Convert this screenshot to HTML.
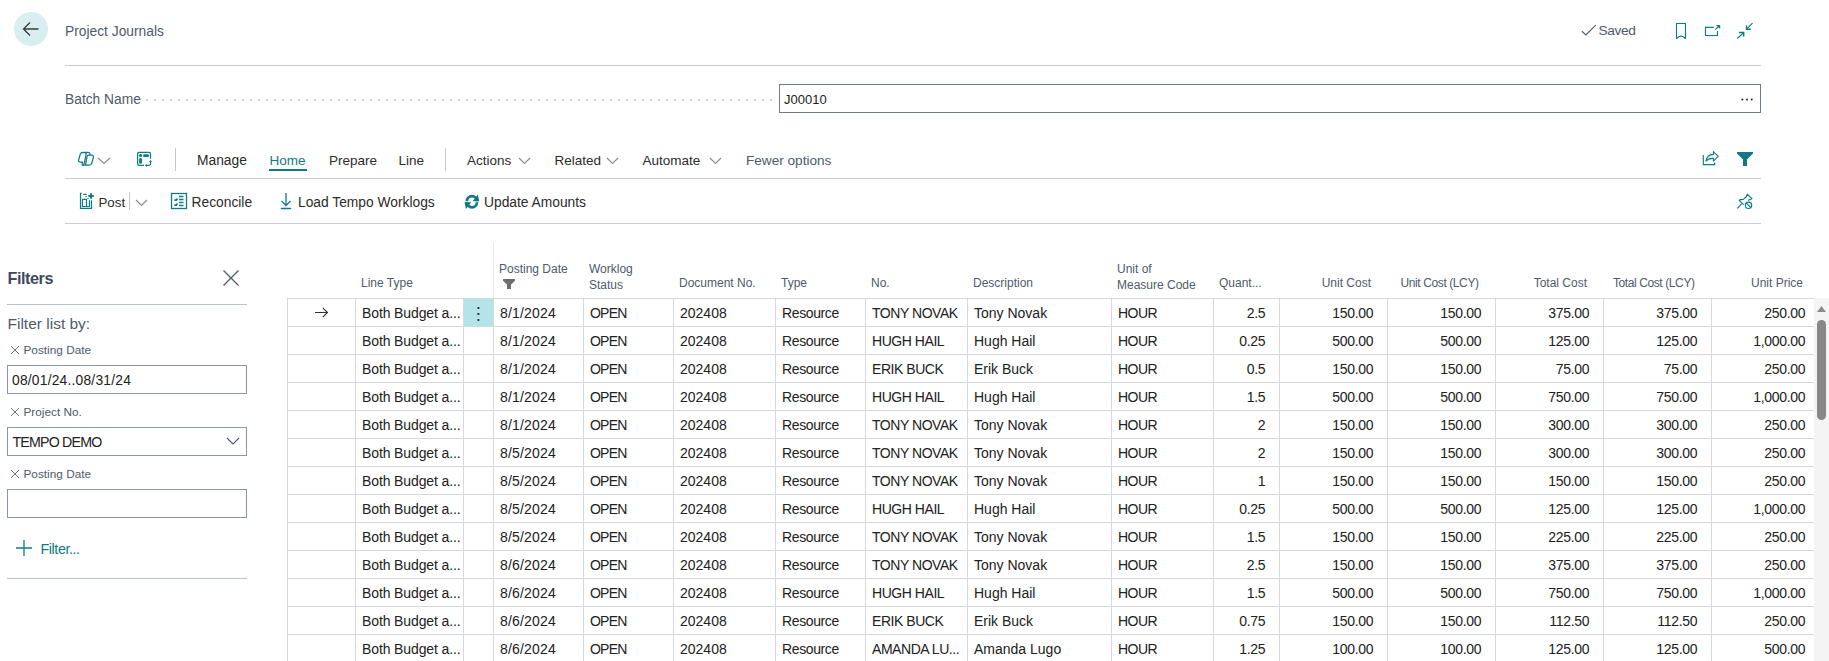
<!DOCTYPE html>
<html><head><meta charset="utf-8"><style>
html,body{margin:0;padding:0;background:#fff;}
body{width:1829px;height:661px;overflow:hidden;position:relative;font-family:"Liberation Sans", sans-serif;}
.t{position:absolute;white-space:nowrap;line-height:20px;}
.r{position:absolute;box-sizing:content-box;}
.s{position:absolute;overflow:visible;}
</style></head><body>
<div class="r" style="left:14px;top:12px;width:34px;height:34px;border-radius:50%;background:#d8eef1"></div>
<svg class="s" style="left:22px;top:21px;" width="18" height="16" viewBox="0 0 18 16"><path d="M1.5 8 H16.5 M8 1.5 L1.5 8 L8 14.5" fill="none" stroke="#3b3b3b" stroke-width="1.3"/></svg>
<div class="t" style="top:22.22px;font-size:13.8px;color:#4f5a6b;left:65px;">Project Journals</div>
<svg class="s" style="left:1580px;top:23px;" width="18" height="15" viewBox="0 0 18 15"><path d="M1.9 8.3 L5.9 11.9 L15.7 2.1" fill="none" stroke="#505c6d" stroke-width="1.15"/></svg>
<div class="t" style="top:21.25px;font-size:13.7px;color:#4f5a6b;letter-spacing:-0.35px;left:1598.5px;">Saved</div>
<svg class="s" style="left:1674px;top:22px;" width="14" height="18" viewBox="0 0 14 18"><path d="M2.5 16.5 V1.5 H11.5 V16.5 Q7 11.6 2.5 16.5 Z" fill="none" stroke="#0f7b84" stroke-width="1.15" stroke-linejoin="round"/></svg>
<svg class="s" style="left:1703px;top:23px;" width="19" height="15" viewBox="0 0 19 15"><path d="M10.9 4.3 H2.5 V12.5 H14.5 V7.9" fill="none" stroke="#0f7b84" stroke-width="1.15"/><path d="M12.3 6.6 L15.8 3.2" fill="none" stroke="#0f7b84" stroke-width="1.15"/><path d="M13 1.9 H17.2 V6.1 Z" fill="#0f7b84"/></svg>
<svg class="s" style="left:1735px;top:22px;" width="20" height="18" viewBox="0 0 20 18"><g fill="none" stroke="#0f7b84" stroke-width="1.15"><path d="M17.5 1.2 L11.8 6.9 M2.2 16.5 L8.4 10.8"/></g><g fill="none" stroke="#0f7b84" stroke-width="1.4"><path d="M11.5 3.4 V7.2 H15.8 M4 10.5 H8.7 V14.6"/></g></svg>
<div class="r" style="left:65px;top:65px;width:1696px;height:1px;background:#c9ced6;"></div>
<div class="t" style="top:90.22px;font-size:13.8px;color:#4f5a6b;left:65px;">Batch Name</div>
<div class="r" style="left:146px;top:99px;width:2px;height:2px;background:#cfcfcf;"></div>
<div class="r" style="left:154px;top:99px;width:2px;height:2px;background:#cfcfcf;"></div>
<div class="r" style="left:162px;top:99px;width:2px;height:2px;background:#cfcfcf;"></div>
<div class="r" style="left:170px;top:99px;width:2px;height:2px;background:#cfcfcf;"></div>
<div class="r" style="left:178px;top:99px;width:2px;height:2px;background:#cfcfcf;"></div>
<div class="r" style="left:186px;top:99px;width:2px;height:2px;background:#cfcfcf;"></div>
<div class="r" style="left:194px;top:99px;width:2px;height:2px;background:#cfcfcf;"></div>
<div class="r" style="left:202px;top:99px;width:2px;height:2px;background:#cfcfcf;"></div>
<div class="r" style="left:210px;top:99px;width:2px;height:2px;background:#cfcfcf;"></div>
<div class="r" style="left:218px;top:99px;width:2px;height:2px;background:#cfcfcf;"></div>
<div class="r" style="left:226px;top:99px;width:2px;height:2px;background:#cfcfcf;"></div>
<div class="r" style="left:234px;top:99px;width:2px;height:2px;background:#cfcfcf;"></div>
<div class="r" style="left:242px;top:99px;width:2px;height:2px;background:#cfcfcf;"></div>
<div class="r" style="left:250px;top:99px;width:2px;height:2px;background:#cfcfcf;"></div>
<div class="r" style="left:258px;top:99px;width:2px;height:2px;background:#cfcfcf;"></div>
<div class="r" style="left:266px;top:99px;width:2px;height:2px;background:#cfcfcf;"></div>
<div class="r" style="left:274px;top:99px;width:2px;height:2px;background:#cfcfcf;"></div>
<div class="r" style="left:282px;top:99px;width:2px;height:2px;background:#cfcfcf;"></div>
<div class="r" style="left:290px;top:99px;width:2px;height:2px;background:#cfcfcf;"></div>
<div class="r" style="left:298px;top:99px;width:2px;height:2px;background:#cfcfcf;"></div>
<div class="r" style="left:306px;top:99px;width:2px;height:2px;background:#cfcfcf;"></div>
<div class="r" style="left:314px;top:99px;width:2px;height:2px;background:#cfcfcf;"></div>
<div class="r" style="left:322px;top:99px;width:2px;height:2px;background:#cfcfcf;"></div>
<div class="r" style="left:330px;top:99px;width:2px;height:2px;background:#cfcfcf;"></div>
<div class="r" style="left:338px;top:99px;width:2px;height:2px;background:#cfcfcf;"></div>
<div class="r" style="left:346px;top:99px;width:2px;height:2px;background:#cfcfcf;"></div>
<div class="r" style="left:354px;top:99px;width:2px;height:2px;background:#cfcfcf;"></div>
<div class="r" style="left:362px;top:99px;width:2px;height:2px;background:#cfcfcf;"></div>
<div class="r" style="left:370px;top:99px;width:2px;height:2px;background:#cfcfcf;"></div>
<div class="r" style="left:378px;top:99px;width:2px;height:2px;background:#cfcfcf;"></div>
<div class="r" style="left:386px;top:99px;width:2px;height:2px;background:#cfcfcf;"></div>
<div class="r" style="left:394px;top:99px;width:2px;height:2px;background:#cfcfcf;"></div>
<div class="r" style="left:402px;top:99px;width:2px;height:2px;background:#cfcfcf;"></div>
<div class="r" style="left:410px;top:99px;width:2px;height:2px;background:#cfcfcf;"></div>
<div class="r" style="left:418px;top:99px;width:2px;height:2px;background:#cfcfcf;"></div>
<div class="r" style="left:426px;top:99px;width:2px;height:2px;background:#cfcfcf;"></div>
<div class="r" style="left:434px;top:99px;width:2px;height:2px;background:#cfcfcf;"></div>
<div class="r" style="left:442px;top:99px;width:2px;height:2px;background:#cfcfcf;"></div>
<div class="r" style="left:450px;top:99px;width:2px;height:2px;background:#cfcfcf;"></div>
<div class="r" style="left:458px;top:99px;width:2px;height:2px;background:#cfcfcf;"></div>
<div class="r" style="left:466px;top:99px;width:2px;height:2px;background:#cfcfcf;"></div>
<div class="r" style="left:474px;top:99px;width:2px;height:2px;background:#cfcfcf;"></div>
<div class="r" style="left:482px;top:99px;width:2px;height:2px;background:#cfcfcf;"></div>
<div class="r" style="left:490px;top:99px;width:2px;height:2px;background:#cfcfcf;"></div>
<div class="r" style="left:498px;top:99px;width:2px;height:2px;background:#cfcfcf;"></div>
<div class="r" style="left:506px;top:99px;width:2px;height:2px;background:#cfcfcf;"></div>
<div class="r" style="left:514px;top:99px;width:2px;height:2px;background:#cfcfcf;"></div>
<div class="r" style="left:522px;top:99px;width:2px;height:2px;background:#cfcfcf;"></div>
<div class="r" style="left:530px;top:99px;width:2px;height:2px;background:#cfcfcf;"></div>
<div class="r" style="left:538px;top:99px;width:2px;height:2px;background:#cfcfcf;"></div>
<div class="r" style="left:546px;top:99px;width:2px;height:2px;background:#cfcfcf;"></div>
<div class="r" style="left:554px;top:99px;width:2px;height:2px;background:#cfcfcf;"></div>
<div class="r" style="left:562px;top:99px;width:2px;height:2px;background:#cfcfcf;"></div>
<div class="r" style="left:570px;top:99px;width:2px;height:2px;background:#cfcfcf;"></div>
<div class="r" style="left:578px;top:99px;width:2px;height:2px;background:#cfcfcf;"></div>
<div class="r" style="left:586px;top:99px;width:2px;height:2px;background:#cfcfcf;"></div>
<div class="r" style="left:594px;top:99px;width:2px;height:2px;background:#cfcfcf;"></div>
<div class="r" style="left:602px;top:99px;width:2px;height:2px;background:#cfcfcf;"></div>
<div class="r" style="left:610px;top:99px;width:2px;height:2px;background:#cfcfcf;"></div>
<div class="r" style="left:618px;top:99px;width:2px;height:2px;background:#cfcfcf;"></div>
<div class="r" style="left:626px;top:99px;width:2px;height:2px;background:#cfcfcf;"></div>
<div class="r" style="left:634px;top:99px;width:2px;height:2px;background:#cfcfcf;"></div>
<div class="r" style="left:642px;top:99px;width:2px;height:2px;background:#cfcfcf;"></div>
<div class="r" style="left:650px;top:99px;width:2px;height:2px;background:#cfcfcf;"></div>
<div class="r" style="left:658px;top:99px;width:2px;height:2px;background:#cfcfcf;"></div>
<div class="r" style="left:666px;top:99px;width:2px;height:2px;background:#cfcfcf;"></div>
<div class="r" style="left:674px;top:99px;width:2px;height:2px;background:#cfcfcf;"></div>
<div class="r" style="left:682px;top:99px;width:2px;height:2px;background:#cfcfcf;"></div>
<div class="r" style="left:690px;top:99px;width:2px;height:2px;background:#cfcfcf;"></div>
<div class="r" style="left:698px;top:99px;width:2px;height:2px;background:#cfcfcf;"></div>
<div class="r" style="left:706px;top:99px;width:2px;height:2px;background:#cfcfcf;"></div>
<div class="r" style="left:714px;top:99px;width:2px;height:2px;background:#cfcfcf;"></div>
<div class="r" style="left:722px;top:99px;width:2px;height:2px;background:#cfcfcf;"></div>
<div class="r" style="left:730px;top:99px;width:2px;height:2px;background:#cfcfcf;"></div>
<div class="r" style="left:738px;top:99px;width:2px;height:2px;background:#cfcfcf;"></div>
<div class="r" style="left:746px;top:99px;width:2px;height:2px;background:#cfcfcf;"></div>
<div class="r" style="left:754px;top:99px;width:2px;height:2px;background:#cfcfcf;"></div>
<div class="r" style="left:762px;top:99px;width:2px;height:2px;background:#cfcfcf;"></div>
<div class="r" style="left:770px;top:99px;width:2px;height:2px;background:#cfcfcf;"></div>
<div class="r" style="left:779px;top:84px;width:980px;height:27px;border:1px solid #6f7b88;background:#fff"></div>
<div class="t" style="top:89.50px;font-size:13px;color:#212121;left:784px;">J00010</div>
<svg class="s" style="left:1738px;top:96px;" width="18" height="8" viewBox="0 0 18 8"><g fill="#1b2a44"><circle cx="4.4" cy="3.5" r="1"/><circle cx="9" cy="3.5" r="1"/><circle cx="13.7" cy="3.5" r="1"/></g></svg>
<svg class="s" style="left:75px;top:149px;" width="22" height="20" viewBox="0 0 22 20"><g fill="none" stroke="#0f7b84" stroke-width="1.25" stroke-linejoin="round"><path d="M7.8 3.3 H13.2 Q14.6 3.3 15 4.8 L15.3 6 M11.3 4 L9 15.5 Q8.7 16.4 7.8 16.3 Q7 16 7.2 14.8 L7.5 13 H5 Q3.3 12.9 3.6 11.2 L5.3 5.2 Q5.9 3.3 7.8 3.3 Z"/><path d="M13.2 6.2 H16.8 Q18.8 6.3 18.4 8.3 L16.8 14.2 Q16.3 16.2 14.2 16.2 H9.2 M13.2 6.2 Q12.2 6.3 12 7.6 L10.6 15.6"/></g></svg>
<svg class="s" style="left:97px;top:157px;" width="14" height="8" viewBox="0 0 14 8"><path d="M1 1 L7 6.5 L13 1" fill="none" stroke="#8a8a8a" stroke-width="1.1"/></svg>
<svg class="s" style="left:134px;top:149px;" width="22" height="20" viewBox="0 0 22 20"><path d="M10 16.3 H5.2 Q3.6 16.3 3.6 14.7 V4.9 Q3.6 3.3 5.2 3.3 H14.9 Q16.5 3.3 16.5 4.9 V9.8" fill="none" stroke="#0f7b84" stroke-width="1.25"/><rect x="5.1" y="5.1" width="2.9" height="2.9" rx="1.2" fill="#0f7b84"/><rect x="9.1" y="5.3" width="5.9" height="2.6" rx="1.2" fill="#0f7b84"/><rect x="5.1" y="9.1" width="2.9" height="5.7" rx="1.3" fill="#0f7b84"/><path d="M16.5 12.5 V14.8 Q16.5 16.3 15 16.3 H12.3" fill="none" stroke="#0f7b84" stroke-width="1.25"/><path d="M14.9 12.9 L16.5 11 L18.1 12.9 Z M12.7 14.7 L10.8 16.3 L12.7 17.9 Z" fill="#0f7b84"/></svg>
<div class="r" style="left:175px;top:148px;width:1px;height:23px;background:#c8c8c8;"></div>
<div class="t" style="top:150.72px;font-size:13.8px;color:#2b2b2b;left:197px;">Manage</div>
<div class="t" style="top:150.82px;font-size:13.5px;color:#0f7b84;left:269.5px;">Home</div>
<div class="r" style="left:269px;top:169px;width:38px;height:2px;background:#0f7b84;"></div>
<div class="t" style="top:150.82px;font-size:13.5px;color:#2b2b2b;left:329px;">Prepare</div>
<div class="t" style="top:150.82px;font-size:13.5px;color:#2b2b2b;left:398.5px;">Line</div>
<div class="r" style="left:445px;top:148px;width:1px;height:23px;background:#c8c8c8;"></div>
<div class="t" style="top:150.82px;font-size:13.5px;color:#2b2b2b;left:467px;">Actions</div>
<svg class="s" style="left:518px;top:157px;" width="13" height="8" viewBox="0 0 13 8"><path d="M1 1 L6.5 6.5 L12 1" fill="none" stroke="#8a8a8a" stroke-width="1.1"/></svg>
<div class="t" style="top:150.82px;font-size:13.5px;color:#2b2b2b;left:554.5px;">Related</div>
<svg class="s" style="left:606px;top:157px;" width="13" height="8" viewBox="0 0 13 8"><path d="M1 1 L6.5 6.5 L12 1" fill="none" stroke="#8a8a8a" stroke-width="1.1"/></svg>
<div class="t" style="top:150.82px;font-size:13.5px;color:#2b2b2b;left:642.5px;">Automate</div>
<svg class="s" style="left:709px;top:157px;" width="13" height="8" viewBox="0 0 13 8"><path d="M1 1 L6.5 6.5 L12 1" fill="none" stroke="#8a8a8a" stroke-width="1.1"/></svg>
<div class="t" style="top:150.79px;font-size:13.6px;color:#4f5a6b;left:746px;">Fewer options</div>
<svg class="s" style="left:1702px;top:150px;" width="18" height="17" viewBox="0 0 18 17"><path d="M1.3 5 V14.6 H12.7 V12.6" fill="none" stroke="#0f7b84" stroke-width="1.15"/><path d="M4 11.2 Q4.8 4.8 11.4 4.4 V1.6 L16.2 6.4 L11.4 11.1 V8.4 Q6.6 8 4 11.2 Z" fill="none" stroke="#0f7b84" stroke-width="1.1" stroke-linejoin="round"/></svg>
<svg class="s" style="left:1736px;top:151px;" width="18" height="16" viewBox="0 0 18 16"><path d="M1 1 H17 V2.5 L11 8.5 V15 H7 V8.5 L1 2.5 Z" fill="#0f7b84"/></svg>
<div class="r" style="left:65px;top:178px;width:1696px;height:1px;background:#c9ced6;"></div>
<svg class="s" style="left:77px;top:190px;" width="20" height="22" viewBox="0 0 20 22"><g fill="none" stroke="#0f7b84" stroke-width="1.2"><path d="M4.8 3.3 H3.5 V18.3 H14.5 V10.3"/><path d="M6.3 4.3 H9.7 M8.3 6.5 H9.7 M10.3 8.5 H11.7"/><path d="M9.5 16.5 V9.3 H5.5 V16.5 H12.5 V10.3"/></g><path d="M11.3 6 H16.8 M14 3.2 V8.8" stroke="#0f7b84" stroke-width="1.9"/></svg>
<div class="t" style="top:193.39px;font-size:13.3px;color:#2b2b2b;left:98.5px;">Post</div>
<div class="r" style="left:129px;top:192px;width:1px;height:18px;background:#c8c8c8;"></div>
<svg class="s" style="left:135px;top:199px;" width="13" height="8" viewBox="0 0 13 8"><path d="M1 1 L6.5 6.5 L12 1" fill="none" stroke="#8a8a8a" stroke-width="1.1"/></svg>
<svg class="s" style="left:170px;top:192px;" width="18" height="18" viewBox="0 0 18 18"><g fill="none" stroke="#0f7b84" stroke-width="1.3"><rect x="1.5" y="1.5" width="15" height="15"/><path d="M9 4.5 H13.5 M9 7.5 H13.5 M9 10.5 H13.5 M9 13.5 H13.5"/><path d="M4.3 8.2 H6.3 L7.4 6.6 M4.3 13.2 H6.3 L7.4 11.6" stroke-width="1.7" stroke-linejoin="round"/></g></svg>
<div class="t" style="top:193.22px;font-size:13.8px;color:#2b2b2b;left:191.5px;">Reconcile</div>
<svg class="s" style="left:279px;top:192px;" width="14" height="18" viewBox="0 0 14 18"><path d="M7 1 V13 M2.5 9 L7 13.5 L11.5 9" fill="none" stroke="#0f7b84" stroke-width="1.3"/><path d="M2.5 16.5 H11.5" stroke="#0f7b84" stroke-width="1.5" stroke-linecap="round"/></svg>
<div class="t" style="top:193.22px;font-size:13.8px;color:#2b2b2b;left:298px;">Load Tempo Worklogs</div>
<svg class="s" style="left:455px;top:185px;" width="30" height="30" viewBox="0 0 30 30"><g fill="none" stroke="#0f7b84" stroke-width="2.7"><path d="M11.8 16.2 A5.1 5.1 0 0 1 22 16.2"/><path d="M22 17.2 A5.1 5.1 0 0 1 11.8 17.2"/></g><g fill="#0f7b84"><path d="M17.6 16.2 L24.3 16.2 L22.8 9.4 Z"/><path d="M16.2 17.2 L9.5 17.2 L11 24 Z"/></g></svg>
<div class="t" style="top:193.22px;font-size:13.8px;color:#2b2b2b;left:484px;">Update Amounts</div>
<svg class="s" style="left:1735px;top:192px;" width="20" height="19" viewBox="0 0 20 19"><g fill="none" stroke="#0f7b84" stroke-width="1.15" stroke-linejoin="round"><path d="M2.3 16.4 L6.8 11.7"/><path d="M8.6 12.7 L4.2 8.4 Q4.6 7.4 8.4 7.4 L11.5 4.5 L12.1 2.3 L17 6.6 Q16.6 7.4 14.7 7.6 L13.1 8.6"/><circle cx="13.5" cy="13.3" r="3.2"/><path d="M11.3 11.1 L15.7 15.5"/></g></svg>
<div class="r" style="left:65px;top:223px;width:1696px;height:1px;background:#c9ced6;"></div>
<div class="t" style="top:268.39px;font-size:16.2px;color:#3f4b5d;font-weight:700;letter-spacing:-0.45px;left:7.5px;">Filters</div>
<svg class="s" style="left:222px;top:269px;" width="18" height="18" viewBox="0 0 18 18"><path d="M1.5 1.5 L16.5 16.5 M16.5 1.5 L1.5 16.5" stroke="#505c6d" stroke-width="1.3"/></svg>
<div class="r" style="left:7px;top:304px;width:240px;height:1px;background:#b9c0c8;"></div>
<div class="t" style="top:313.63px;font-size:15.5px;color:#4f5a6b;left:7.5px;">Filter list by:</div>
<svg class="s" style="left:10px;top:345px;" width="10" height="10" viewBox="0 0 10 10"><path d="M1 1 L9 9 M9 1 L1 9" stroke="#6b7785" stroke-width="1"/></svg>
<div class="t" style="top:340.41px;font-size:11.8px;color:#4f5a6b;left:23.5px;">Posting Date</div>
<div class="r" style="left:7px;top:365px;width:238px;height:27px;border:1px solid #8a96a3;background:#fff"></div>
<div class="t" style="top:370.72px;font-size:13.8px;color:#212121;letter-spacing:0.22px;left:12px;">08/01/24..08/31/24</div>
<svg class="s" style="left:10px;top:407px;" width="10" height="10" viewBox="0 0 10 10"><path d="M1 1 L9 9 M9 1 L1 9" stroke="#6b7785" stroke-width="1"/></svg>
<div class="t" style="top:402.41px;font-size:11.8px;color:#4f5a6b;left:23.5px;">Project No.</div>
<div class="r" style="left:7px;top:427px;width:238px;height:27px;border:1px solid #8a96a3;background:#fff"></div>
<div class="t" style="top:432.08px;font-size:14.2px;color:#212121;letter-spacing:-0.8px;left:12.5px;">TEMPO DEMO</div>
<svg class="s" style="left:226px;top:437px;" width="14" height="9" viewBox="0 0 14 9"><path d="M1 1 L7 7 L13 1" fill="none" stroke="#505c6d" stroke-width="1.1"/></svg>
<svg class="s" style="left:10px;top:469px;" width="10" height="10" viewBox="0 0 10 10"><path d="M1 1 L9 9 M9 1 L1 9" stroke="#6b7785" stroke-width="1"/></svg>
<div class="t" style="top:464.41px;font-size:11.8px;color:#4f5a6b;left:23.5px;">Posting Date</div>
<div class="r" style="left:7px;top:489px;width:238px;height:27px;border:1px solid #8a96a3;background:#fff"></div>
<svg class="s" style="left:15px;top:539px;" width="18" height="18" viewBox="0 0 18 18"><path d="M9 1 V17 M1 9 H17" stroke="#0f7b84" stroke-width="1.3"/></svg>
<div class="t" style="top:538.51px;font-size:14.4px;color:#0f7b84;letter-spacing:-0.45px;left:40.5px;">Filter...</div>
<div class="r" style="left:7px;top:578px;width:240px;height:1px;background:#b9c0c8;"></div>
<div class="r" style="left:287px;top:298px;width:1px;height:363px;background:#d5d8dd;"></div>
<div class="r" style="left:355px;top:298px;width:1px;height:363px;background:#d5d8dd;"></div>
<div class="r" style="left:463px;top:298px;width:1px;height:363px;background:#d5d8dd;"></div>
<div class="r" style="left:493px;top:298px;width:1px;height:363px;background:#d5d8dd;"></div>
<div class="r" style="left:583px;top:298px;width:1px;height:363px;background:#d5d8dd;"></div>
<div class="r" style="left:673px;top:298px;width:1px;height:363px;background:#d5d8dd;"></div>
<div class="r" style="left:775px;top:298px;width:1px;height:363px;background:#d5d8dd;"></div>
<div class="r" style="left:865px;top:298px;width:1px;height:363px;background:#d5d8dd;"></div>
<div class="r" style="left:967px;top:298px;width:1px;height:363px;background:#d5d8dd;"></div>
<div class="r" style="left:1111px;top:298px;width:1px;height:363px;background:#d5d8dd;"></div>
<div class="r" style="left:1213px;top:298px;width:1px;height:363px;background:#d5d8dd;"></div>
<div class="r" style="left:1279px;top:298px;width:1px;height:363px;background:#d5d8dd;"></div>
<div class="r" style="left:1387px;top:298px;width:1px;height:363px;background:#d5d8dd;"></div>
<div class="r" style="left:1495px;top:298px;width:1px;height:363px;background:#d5d8dd;"></div>
<div class="r" style="left:1603px;top:298px;width:1px;height:363px;background:#d5d8dd;"></div>
<div class="r" style="left:1711px;top:298px;width:1px;height:363px;background:#d5d8dd;"></div>
<div class="r" style="left:493px;top:242px;width:1px;height:56px;background:#e6e8eb;"></div>
<div class="r" style="left:287px;top:298px;width:1527px;height:1px;background:#d5d8dd;"></div>
<div class="r" style="left:287px;top:326px;width:1527px;height:1px;background:#d5d8dd;"></div>
<div class="r" style="left:287px;top:354px;width:1527px;height:1px;background:#d5d8dd;"></div>
<div class="r" style="left:287px;top:382px;width:1527px;height:1px;background:#d5d8dd;"></div>
<div class="r" style="left:287px;top:410px;width:1527px;height:1px;background:#d5d8dd;"></div>
<div class="r" style="left:287px;top:438px;width:1527px;height:1px;background:#d5d8dd;"></div>
<div class="r" style="left:287px;top:466px;width:1527px;height:1px;background:#d5d8dd;"></div>
<div class="r" style="left:287px;top:494px;width:1527px;height:1px;background:#d5d8dd;"></div>
<div class="r" style="left:287px;top:522px;width:1527px;height:1px;background:#d5d8dd;"></div>
<div class="r" style="left:287px;top:550px;width:1527px;height:1px;background:#d5d8dd;"></div>
<div class="r" style="left:287px;top:578px;width:1527px;height:1px;background:#d5d8dd;"></div>
<div class="r" style="left:287px;top:606px;width:1527px;height:1px;background:#d5d8dd;"></div>
<div class="r" style="left:287px;top:634px;width:1527px;height:1px;background:#d5d8dd;"></div>
<div class="r" style="left:464px;top:299px;width:29px;height:27px;background:#b4e4e8;"></div>
<svg class="s" style="left:474px;top:303px;" width="8" height="20" viewBox="0 0 8 20"><circle cx="4.4" cy="5" r="1.1" fill="#1a1a1a"/><circle cx="4.4" cy="11" r="1.1" fill="#1a1a1a"/><circle cx="4.4" cy="17" r="1.1" fill="#1a1a1a"/></svg>
<svg class="s" style="left:312px;top:306px;" width="18" height="14" viewBox="0 0 18 14"><path d="M3 6.5 H15.5 M10.8 1.8 L15.5 6.5 L10.8 11.2" fill="none" stroke="#333" stroke-width="1.1"/></svg>
<div class="t" style="top:272.84px;font-size:12px;color:#4f5a6b;left:361px;">Line Type</div>
<div class="t" style="top:258.84px;font-size:12px;color:#4f5a6b;left:499px;">Posting Date</div>
<svg class="s" style="left:502px;top:278px;" width="14" height="12" viewBox="0 0 14 12"><path d="M1 1 H13 V2.8 L9 6.5 V11 H5 V6.5 L1 2.8 Z" fill="#6e6e6e"/></svg>
<div class="t" style="top:258.84px;font-size:12px;color:#4f5a6b;left:589px;">Worklog</div>
<div class="t" style="top:274.84px;font-size:12px;color:#4f5a6b;left:589px;">Status</div>
<div class="t" style="top:272.84px;font-size:12px;color:#4f5a6b;left:679px;">Document No.</div>
<div class="t" style="top:272.84px;font-size:12px;color:#4f5a6b;left:781px;">Type</div>
<div class="t" style="top:272.84px;font-size:12px;color:#4f5a6b;left:871px;">No.</div>
<div class="t" style="top:272.84px;font-size:12px;color:#4f5a6b;left:973px;">Description</div>
<div class="t" style="top:258.84px;font-size:12px;color:#4f5a6b;left:1117px;">Unit of</div>
<div class="t" style="top:274.84px;font-size:12px;color:#4f5a6b;left:1117px;">Measure Code</div>
<div class="t" style="top:272.84px;font-size:12px;color:#4f5a6b;left:1219px;">Quant...</div>
<div class="t" style="top:272.84px;font-size:12px;color:#4f5a6b;left:971px;width:400px;text-align:right;">Unit Cost</div>
<div class="t" style="top:272.84px;font-size:12px;color:#4f5a6b;letter-spacing:-0.4px;left:1078.6px;width:400px;text-align:right;">Unit Cost (LCY)</div>
<div class="t" style="top:272.84px;font-size:12px;color:#4f5a6b;left:1187px;width:400px;text-align:right;">Total Cost</div>
<div class="t" style="top:272.84px;font-size:12px;color:#4f5a6b;letter-spacing:-0.4px;left:1294.6px;width:400px;text-align:right;">Total Cost (LCY)</div>
<div class="t" style="top:272.84px;font-size:12px;color:#4f5a6b;left:1403px;width:400px;text-align:right;">Unit Price</div>
<div class="t" style="top:303.15px;font-size:14px;color:#212121;letter-spacing:-0.12px;left:362px;">Both Budget a...</div>
<div class="t" style="top:303.15px;font-size:14px;color:#212121;letter-spacing:0.18px;left:500px;">8/1/2024</div>
<div class="t" style="top:303.15px;font-size:14px;color:#212121;letter-spacing:-0.8px;left:590px;">OPEN</div>
<div class="t" style="top:303.15px;font-size:14px;color:#212121;left:680px;">202408</div>
<div class="t" style="top:303.15px;font-size:14px;color:#212121;letter-spacing:-0.38px;left:782px;">Resource</div>
<div class="t" style="top:303.15px;font-size:14px;color:#212121;letter-spacing:-0.45px;left:872px;">TONY NOVAK</div>
<div class="t" style="top:303.15px;font-size:14px;color:#212121;left:974px;">Tony Novak</div>
<div class="t" style="top:303.15px;font-size:14px;color:#212121;letter-spacing:-0.5px;left:1118px;">HOUR</div>
<div class="t" style="top:303.15px;font-size:14px;color:#212121;letter-spacing:-0.3px;left:865.3px;width:400px;text-align:right;">2.5</div>
<div class="t" style="top:303.15px;font-size:14px;color:#212121;letter-spacing:-0.3px;left:973.3px;width:400px;text-align:right;">150.00</div>
<div class="t" style="top:303.15px;font-size:14px;color:#212121;letter-spacing:-0.3px;left:1081.3px;width:400px;text-align:right;">150.00</div>
<div class="t" style="top:303.15px;font-size:14px;color:#212121;letter-spacing:-0.3px;left:1189.3px;width:400px;text-align:right;">375.00</div>
<div class="t" style="top:303.15px;font-size:14px;color:#212121;letter-spacing:-0.3px;left:1297.3px;width:400px;text-align:right;">375.00</div>
<div class="t" style="top:303.15px;font-size:14px;color:#212121;letter-spacing:-0.3px;left:1405.3px;width:400px;text-align:right;">250.00</div>
<div class="t" style="top:331.15px;font-size:14px;color:#212121;letter-spacing:-0.12px;left:362px;">Both Budget a...</div>
<div class="t" style="top:331.15px;font-size:14px;color:#212121;letter-spacing:0.18px;left:500px;">8/1/2024</div>
<div class="t" style="top:331.15px;font-size:14px;color:#212121;letter-spacing:-0.8px;left:590px;">OPEN</div>
<div class="t" style="top:331.15px;font-size:14px;color:#212121;left:680px;">202408</div>
<div class="t" style="top:331.15px;font-size:14px;color:#212121;letter-spacing:-0.38px;left:782px;">Resource</div>
<div class="t" style="top:331.15px;font-size:14px;color:#212121;letter-spacing:-0.45px;left:872px;">HUGH HAIL</div>
<div class="t" style="top:331.15px;font-size:14px;color:#212121;left:974px;">Hugh Hail</div>
<div class="t" style="top:331.15px;font-size:14px;color:#212121;letter-spacing:-0.5px;left:1118px;">HOUR</div>
<div class="t" style="top:331.15px;font-size:14px;color:#212121;letter-spacing:-0.3px;left:865.3px;width:400px;text-align:right;">0.25</div>
<div class="t" style="top:331.15px;font-size:14px;color:#212121;letter-spacing:-0.3px;left:973.3px;width:400px;text-align:right;">500.00</div>
<div class="t" style="top:331.15px;font-size:14px;color:#212121;letter-spacing:-0.3px;left:1081.3px;width:400px;text-align:right;">500.00</div>
<div class="t" style="top:331.15px;font-size:14px;color:#212121;letter-spacing:-0.3px;left:1189.3px;width:400px;text-align:right;">125.00</div>
<div class="t" style="top:331.15px;font-size:14px;color:#212121;letter-spacing:-0.3px;left:1297.3px;width:400px;text-align:right;">125.00</div>
<div class="t" style="top:331.15px;font-size:14px;color:#212121;letter-spacing:-0.3px;left:1405.3px;width:400px;text-align:right;">1,000.00</div>
<div class="t" style="top:359.15px;font-size:14px;color:#212121;letter-spacing:-0.12px;left:362px;">Both Budget a...</div>
<div class="t" style="top:359.15px;font-size:14px;color:#212121;letter-spacing:0.18px;left:500px;">8/1/2024</div>
<div class="t" style="top:359.15px;font-size:14px;color:#212121;letter-spacing:-0.8px;left:590px;">OPEN</div>
<div class="t" style="top:359.15px;font-size:14px;color:#212121;left:680px;">202408</div>
<div class="t" style="top:359.15px;font-size:14px;color:#212121;letter-spacing:-0.38px;left:782px;">Resource</div>
<div class="t" style="top:359.15px;font-size:14px;color:#212121;letter-spacing:-0.45px;left:872px;">ERIK BUCK</div>
<div class="t" style="top:359.15px;font-size:14px;color:#212121;left:974px;">Erik Buck</div>
<div class="t" style="top:359.15px;font-size:14px;color:#212121;letter-spacing:-0.5px;left:1118px;">HOUR</div>
<div class="t" style="top:359.15px;font-size:14px;color:#212121;letter-spacing:-0.3px;left:865.3px;width:400px;text-align:right;">0.5</div>
<div class="t" style="top:359.15px;font-size:14px;color:#212121;letter-spacing:-0.3px;left:973.3px;width:400px;text-align:right;">150.00</div>
<div class="t" style="top:359.15px;font-size:14px;color:#212121;letter-spacing:-0.3px;left:1081.3px;width:400px;text-align:right;">150.00</div>
<div class="t" style="top:359.15px;font-size:14px;color:#212121;letter-spacing:-0.3px;left:1189.3px;width:400px;text-align:right;">75.00</div>
<div class="t" style="top:359.15px;font-size:14px;color:#212121;letter-spacing:-0.3px;left:1297.3px;width:400px;text-align:right;">75.00</div>
<div class="t" style="top:359.15px;font-size:14px;color:#212121;letter-spacing:-0.3px;left:1405.3px;width:400px;text-align:right;">250.00</div>
<div class="t" style="top:387.15px;font-size:14px;color:#212121;letter-spacing:-0.12px;left:362px;">Both Budget a...</div>
<div class="t" style="top:387.15px;font-size:14px;color:#212121;letter-spacing:0.18px;left:500px;">8/1/2024</div>
<div class="t" style="top:387.15px;font-size:14px;color:#212121;letter-spacing:-0.8px;left:590px;">OPEN</div>
<div class="t" style="top:387.15px;font-size:14px;color:#212121;left:680px;">202408</div>
<div class="t" style="top:387.15px;font-size:14px;color:#212121;letter-spacing:-0.38px;left:782px;">Resource</div>
<div class="t" style="top:387.15px;font-size:14px;color:#212121;letter-spacing:-0.45px;left:872px;">HUGH HAIL</div>
<div class="t" style="top:387.15px;font-size:14px;color:#212121;left:974px;">Hugh Hail</div>
<div class="t" style="top:387.15px;font-size:14px;color:#212121;letter-spacing:-0.5px;left:1118px;">HOUR</div>
<div class="t" style="top:387.15px;font-size:14px;color:#212121;letter-spacing:-0.3px;left:865.3px;width:400px;text-align:right;">1.5</div>
<div class="t" style="top:387.15px;font-size:14px;color:#212121;letter-spacing:-0.3px;left:973.3px;width:400px;text-align:right;">500.00</div>
<div class="t" style="top:387.15px;font-size:14px;color:#212121;letter-spacing:-0.3px;left:1081.3px;width:400px;text-align:right;">500.00</div>
<div class="t" style="top:387.15px;font-size:14px;color:#212121;letter-spacing:-0.3px;left:1189.3px;width:400px;text-align:right;">750.00</div>
<div class="t" style="top:387.15px;font-size:14px;color:#212121;letter-spacing:-0.3px;left:1297.3px;width:400px;text-align:right;">750.00</div>
<div class="t" style="top:387.15px;font-size:14px;color:#212121;letter-spacing:-0.3px;left:1405.3px;width:400px;text-align:right;">1,000.00</div>
<div class="t" style="top:415.15px;font-size:14px;color:#212121;letter-spacing:-0.12px;left:362px;">Both Budget a...</div>
<div class="t" style="top:415.15px;font-size:14px;color:#212121;letter-spacing:0.18px;left:500px;">8/1/2024</div>
<div class="t" style="top:415.15px;font-size:14px;color:#212121;letter-spacing:-0.8px;left:590px;">OPEN</div>
<div class="t" style="top:415.15px;font-size:14px;color:#212121;left:680px;">202408</div>
<div class="t" style="top:415.15px;font-size:14px;color:#212121;letter-spacing:-0.38px;left:782px;">Resource</div>
<div class="t" style="top:415.15px;font-size:14px;color:#212121;letter-spacing:-0.45px;left:872px;">TONY NOVAK</div>
<div class="t" style="top:415.15px;font-size:14px;color:#212121;left:974px;">Tony Novak</div>
<div class="t" style="top:415.15px;font-size:14px;color:#212121;letter-spacing:-0.5px;left:1118px;">HOUR</div>
<div class="t" style="top:415.15px;font-size:14px;color:#212121;letter-spacing:-0.3px;left:865.3px;width:400px;text-align:right;">2</div>
<div class="t" style="top:415.15px;font-size:14px;color:#212121;letter-spacing:-0.3px;left:973.3px;width:400px;text-align:right;">150.00</div>
<div class="t" style="top:415.15px;font-size:14px;color:#212121;letter-spacing:-0.3px;left:1081.3px;width:400px;text-align:right;">150.00</div>
<div class="t" style="top:415.15px;font-size:14px;color:#212121;letter-spacing:-0.3px;left:1189.3px;width:400px;text-align:right;">300.00</div>
<div class="t" style="top:415.15px;font-size:14px;color:#212121;letter-spacing:-0.3px;left:1297.3px;width:400px;text-align:right;">300.00</div>
<div class="t" style="top:415.15px;font-size:14px;color:#212121;letter-spacing:-0.3px;left:1405.3px;width:400px;text-align:right;">250.00</div>
<div class="t" style="top:443.15px;font-size:14px;color:#212121;letter-spacing:-0.12px;left:362px;">Both Budget a...</div>
<div class="t" style="top:443.15px;font-size:14px;color:#212121;letter-spacing:0.18px;left:500px;">8/5/2024</div>
<div class="t" style="top:443.15px;font-size:14px;color:#212121;letter-spacing:-0.8px;left:590px;">OPEN</div>
<div class="t" style="top:443.15px;font-size:14px;color:#212121;left:680px;">202408</div>
<div class="t" style="top:443.15px;font-size:14px;color:#212121;letter-spacing:-0.38px;left:782px;">Resource</div>
<div class="t" style="top:443.15px;font-size:14px;color:#212121;letter-spacing:-0.45px;left:872px;">TONY NOVAK</div>
<div class="t" style="top:443.15px;font-size:14px;color:#212121;left:974px;">Tony Novak</div>
<div class="t" style="top:443.15px;font-size:14px;color:#212121;letter-spacing:-0.5px;left:1118px;">HOUR</div>
<div class="t" style="top:443.15px;font-size:14px;color:#212121;letter-spacing:-0.3px;left:865.3px;width:400px;text-align:right;">2</div>
<div class="t" style="top:443.15px;font-size:14px;color:#212121;letter-spacing:-0.3px;left:973.3px;width:400px;text-align:right;">150.00</div>
<div class="t" style="top:443.15px;font-size:14px;color:#212121;letter-spacing:-0.3px;left:1081.3px;width:400px;text-align:right;">150.00</div>
<div class="t" style="top:443.15px;font-size:14px;color:#212121;letter-spacing:-0.3px;left:1189.3px;width:400px;text-align:right;">300.00</div>
<div class="t" style="top:443.15px;font-size:14px;color:#212121;letter-spacing:-0.3px;left:1297.3px;width:400px;text-align:right;">300.00</div>
<div class="t" style="top:443.15px;font-size:14px;color:#212121;letter-spacing:-0.3px;left:1405.3px;width:400px;text-align:right;">250.00</div>
<div class="t" style="top:471.15px;font-size:14px;color:#212121;letter-spacing:-0.12px;left:362px;">Both Budget a...</div>
<div class="t" style="top:471.15px;font-size:14px;color:#212121;letter-spacing:0.18px;left:500px;">8/5/2024</div>
<div class="t" style="top:471.15px;font-size:14px;color:#212121;letter-spacing:-0.8px;left:590px;">OPEN</div>
<div class="t" style="top:471.15px;font-size:14px;color:#212121;left:680px;">202408</div>
<div class="t" style="top:471.15px;font-size:14px;color:#212121;letter-spacing:-0.38px;left:782px;">Resource</div>
<div class="t" style="top:471.15px;font-size:14px;color:#212121;letter-spacing:-0.45px;left:872px;">TONY NOVAK</div>
<div class="t" style="top:471.15px;font-size:14px;color:#212121;left:974px;">Tony Novak</div>
<div class="t" style="top:471.15px;font-size:14px;color:#212121;letter-spacing:-0.5px;left:1118px;">HOUR</div>
<div class="t" style="top:471.15px;font-size:14px;color:#212121;letter-spacing:-0.3px;left:865.3px;width:400px;text-align:right;">1</div>
<div class="t" style="top:471.15px;font-size:14px;color:#212121;letter-spacing:-0.3px;left:973.3px;width:400px;text-align:right;">150.00</div>
<div class="t" style="top:471.15px;font-size:14px;color:#212121;letter-spacing:-0.3px;left:1081.3px;width:400px;text-align:right;">150.00</div>
<div class="t" style="top:471.15px;font-size:14px;color:#212121;letter-spacing:-0.3px;left:1189.3px;width:400px;text-align:right;">150.00</div>
<div class="t" style="top:471.15px;font-size:14px;color:#212121;letter-spacing:-0.3px;left:1297.3px;width:400px;text-align:right;">150.00</div>
<div class="t" style="top:471.15px;font-size:14px;color:#212121;letter-spacing:-0.3px;left:1405.3px;width:400px;text-align:right;">250.00</div>
<div class="t" style="top:499.15px;font-size:14px;color:#212121;letter-spacing:-0.12px;left:362px;">Both Budget a...</div>
<div class="t" style="top:499.15px;font-size:14px;color:#212121;letter-spacing:0.18px;left:500px;">8/5/2024</div>
<div class="t" style="top:499.15px;font-size:14px;color:#212121;letter-spacing:-0.8px;left:590px;">OPEN</div>
<div class="t" style="top:499.15px;font-size:14px;color:#212121;left:680px;">202408</div>
<div class="t" style="top:499.15px;font-size:14px;color:#212121;letter-spacing:-0.38px;left:782px;">Resource</div>
<div class="t" style="top:499.15px;font-size:14px;color:#212121;letter-spacing:-0.45px;left:872px;">HUGH HAIL</div>
<div class="t" style="top:499.15px;font-size:14px;color:#212121;left:974px;">Hugh Hail</div>
<div class="t" style="top:499.15px;font-size:14px;color:#212121;letter-spacing:-0.5px;left:1118px;">HOUR</div>
<div class="t" style="top:499.15px;font-size:14px;color:#212121;letter-spacing:-0.3px;left:865.3px;width:400px;text-align:right;">0.25</div>
<div class="t" style="top:499.15px;font-size:14px;color:#212121;letter-spacing:-0.3px;left:973.3px;width:400px;text-align:right;">500.00</div>
<div class="t" style="top:499.15px;font-size:14px;color:#212121;letter-spacing:-0.3px;left:1081.3px;width:400px;text-align:right;">500.00</div>
<div class="t" style="top:499.15px;font-size:14px;color:#212121;letter-spacing:-0.3px;left:1189.3px;width:400px;text-align:right;">125.00</div>
<div class="t" style="top:499.15px;font-size:14px;color:#212121;letter-spacing:-0.3px;left:1297.3px;width:400px;text-align:right;">125.00</div>
<div class="t" style="top:499.15px;font-size:14px;color:#212121;letter-spacing:-0.3px;left:1405.3px;width:400px;text-align:right;">1,000.00</div>
<div class="t" style="top:527.15px;font-size:14px;color:#212121;letter-spacing:-0.12px;left:362px;">Both Budget a...</div>
<div class="t" style="top:527.15px;font-size:14px;color:#212121;letter-spacing:0.18px;left:500px;">8/5/2024</div>
<div class="t" style="top:527.15px;font-size:14px;color:#212121;letter-spacing:-0.8px;left:590px;">OPEN</div>
<div class="t" style="top:527.15px;font-size:14px;color:#212121;left:680px;">202408</div>
<div class="t" style="top:527.15px;font-size:14px;color:#212121;letter-spacing:-0.38px;left:782px;">Resource</div>
<div class="t" style="top:527.15px;font-size:14px;color:#212121;letter-spacing:-0.45px;left:872px;">TONY NOVAK</div>
<div class="t" style="top:527.15px;font-size:14px;color:#212121;left:974px;">Tony Novak</div>
<div class="t" style="top:527.15px;font-size:14px;color:#212121;letter-spacing:-0.5px;left:1118px;">HOUR</div>
<div class="t" style="top:527.15px;font-size:14px;color:#212121;letter-spacing:-0.3px;left:865.3px;width:400px;text-align:right;">1.5</div>
<div class="t" style="top:527.15px;font-size:14px;color:#212121;letter-spacing:-0.3px;left:973.3px;width:400px;text-align:right;">150.00</div>
<div class="t" style="top:527.15px;font-size:14px;color:#212121;letter-spacing:-0.3px;left:1081.3px;width:400px;text-align:right;">150.00</div>
<div class="t" style="top:527.15px;font-size:14px;color:#212121;letter-spacing:-0.3px;left:1189.3px;width:400px;text-align:right;">225.00</div>
<div class="t" style="top:527.15px;font-size:14px;color:#212121;letter-spacing:-0.3px;left:1297.3px;width:400px;text-align:right;">225.00</div>
<div class="t" style="top:527.15px;font-size:14px;color:#212121;letter-spacing:-0.3px;left:1405.3px;width:400px;text-align:right;">250.00</div>
<div class="t" style="top:555.15px;font-size:14px;color:#212121;letter-spacing:-0.12px;left:362px;">Both Budget a...</div>
<div class="t" style="top:555.15px;font-size:14px;color:#212121;letter-spacing:0.18px;left:500px;">8/6/2024</div>
<div class="t" style="top:555.15px;font-size:14px;color:#212121;letter-spacing:-0.8px;left:590px;">OPEN</div>
<div class="t" style="top:555.15px;font-size:14px;color:#212121;left:680px;">202408</div>
<div class="t" style="top:555.15px;font-size:14px;color:#212121;letter-spacing:-0.38px;left:782px;">Resource</div>
<div class="t" style="top:555.15px;font-size:14px;color:#212121;letter-spacing:-0.45px;left:872px;">TONY NOVAK</div>
<div class="t" style="top:555.15px;font-size:14px;color:#212121;left:974px;">Tony Novak</div>
<div class="t" style="top:555.15px;font-size:14px;color:#212121;letter-spacing:-0.5px;left:1118px;">HOUR</div>
<div class="t" style="top:555.15px;font-size:14px;color:#212121;letter-spacing:-0.3px;left:865.3px;width:400px;text-align:right;">2.5</div>
<div class="t" style="top:555.15px;font-size:14px;color:#212121;letter-spacing:-0.3px;left:973.3px;width:400px;text-align:right;">150.00</div>
<div class="t" style="top:555.15px;font-size:14px;color:#212121;letter-spacing:-0.3px;left:1081.3px;width:400px;text-align:right;">150.00</div>
<div class="t" style="top:555.15px;font-size:14px;color:#212121;letter-spacing:-0.3px;left:1189.3px;width:400px;text-align:right;">375.00</div>
<div class="t" style="top:555.15px;font-size:14px;color:#212121;letter-spacing:-0.3px;left:1297.3px;width:400px;text-align:right;">375.00</div>
<div class="t" style="top:555.15px;font-size:14px;color:#212121;letter-spacing:-0.3px;left:1405.3px;width:400px;text-align:right;">250.00</div>
<div class="t" style="top:583.15px;font-size:14px;color:#212121;letter-spacing:-0.12px;left:362px;">Both Budget a...</div>
<div class="t" style="top:583.15px;font-size:14px;color:#212121;letter-spacing:0.18px;left:500px;">8/6/2024</div>
<div class="t" style="top:583.15px;font-size:14px;color:#212121;letter-spacing:-0.8px;left:590px;">OPEN</div>
<div class="t" style="top:583.15px;font-size:14px;color:#212121;left:680px;">202408</div>
<div class="t" style="top:583.15px;font-size:14px;color:#212121;letter-spacing:-0.38px;left:782px;">Resource</div>
<div class="t" style="top:583.15px;font-size:14px;color:#212121;letter-spacing:-0.45px;left:872px;">HUGH HAIL</div>
<div class="t" style="top:583.15px;font-size:14px;color:#212121;left:974px;">Hugh Hail</div>
<div class="t" style="top:583.15px;font-size:14px;color:#212121;letter-spacing:-0.5px;left:1118px;">HOUR</div>
<div class="t" style="top:583.15px;font-size:14px;color:#212121;letter-spacing:-0.3px;left:865.3px;width:400px;text-align:right;">1.5</div>
<div class="t" style="top:583.15px;font-size:14px;color:#212121;letter-spacing:-0.3px;left:973.3px;width:400px;text-align:right;">500.00</div>
<div class="t" style="top:583.15px;font-size:14px;color:#212121;letter-spacing:-0.3px;left:1081.3px;width:400px;text-align:right;">500.00</div>
<div class="t" style="top:583.15px;font-size:14px;color:#212121;letter-spacing:-0.3px;left:1189.3px;width:400px;text-align:right;">750.00</div>
<div class="t" style="top:583.15px;font-size:14px;color:#212121;letter-spacing:-0.3px;left:1297.3px;width:400px;text-align:right;">750.00</div>
<div class="t" style="top:583.15px;font-size:14px;color:#212121;letter-spacing:-0.3px;left:1405.3px;width:400px;text-align:right;">1,000.00</div>
<div class="t" style="top:611.15px;font-size:14px;color:#212121;letter-spacing:-0.12px;left:362px;">Both Budget a...</div>
<div class="t" style="top:611.15px;font-size:14px;color:#212121;letter-spacing:0.18px;left:500px;">8/6/2024</div>
<div class="t" style="top:611.15px;font-size:14px;color:#212121;letter-spacing:-0.8px;left:590px;">OPEN</div>
<div class="t" style="top:611.15px;font-size:14px;color:#212121;left:680px;">202408</div>
<div class="t" style="top:611.15px;font-size:14px;color:#212121;letter-spacing:-0.38px;left:782px;">Resource</div>
<div class="t" style="top:611.15px;font-size:14px;color:#212121;letter-spacing:-0.45px;left:872px;">ERIK BUCK</div>
<div class="t" style="top:611.15px;font-size:14px;color:#212121;left:974px;">Erik Buck</div>
<div class="t" style="top:611.15px;font-size:14px;color:#212121;letter-spacing:-0.5px;left:1118px;">HOUR</div>
<div class="t" style="top:611.15px;font-size:14px;color:#212121;letter-spacing:-0.3px;left:865.3px;width:400px;text-align:right;">0.75</div>
<div class="t" style="top:611.15px;font-size:14px;color:#212121;letter-spacing:-0.3px;left:973.3px;width:400px;text-align:right;">150.00</div>
<div class="t" style="top:611.15px;font-size:14px;color:#212121;letter-spacing:-0.3px;left:1081.3px;width:400px;text-align:right;">150.00</div>
<div class="t" style="top:611.15px;font-size:14px;color:#212121;letter-spacing:-0.3px;left:1189.3px;width:400px;text-align:right;">112.50</div>
<div class="t" style="top:611.15px;font-size:14px;color:#212121;letter-spacing:-0.3px;left:1297.3px;width:400px;text-align:right;">112.50</div>
<div class="t" style="top:611.15px;font-size:14px;color:#212121;letter-spacing:-0.3px;left:1405.3px;width:400px;text-align:right;">250.00</div>
<div class="t" style="top:639.15px;font-size:14px;color:#212121;letter-spacing:-0.12px;left:362px;">Both Budget a...</div>
<div class="t" style="top:639.15px;font-size:14px;color:#212121;letter-spacing:0.18px;left:500px;">8/6/2024</div>
<div class="t" style="top:639.15px;font-size:14px;color:#212121;letter-spacing:-0.8px;left:590px;">OPEN</div>
<div class="t" style="top:639.15px;font-size:14px;color:#212121;left:680px;">202408</div>
<div class="t" style="top:639.15px;font-size:14px;color:#212121;letter-spacing:-0.38px;left:782px;">Resource</div>
<div class="t" style="top:639.15px;font-size:14px;color:#212121;letter-spacing:-0.45px;left:872px;">AMANDA LU...</div>
<div class="t" style="top:639.15px;font-size:14px;color:#212121;left:974px;">Amanda Lugo</div>
<div class="t" style="top:639.15px;font-size:14px;color:#212121;letter-spacing:-0.5px;left:1118px;">HOUR</div>
<div class="t" style="top:639.15px;font-size:14px;color:#212121;letter-spacing:-0.3px;left:865.3px;width:400px;text-align:right;">1.25</div>
<div class="t" style="top:639.15px;font-size:14px;color:#212121;letter-spacing:-0.3px;left:973.3px;width:400px;text-align:right;">100.00</div>
<div class="t" style="top:639.15px;font-size:14px;color:#212121;letter-spacing:-0.3px;left:1081.3px;width:400px;text-align:right;">100.00</div>
<div class="t" style="top:639.15px;font-size:14px;color:#212121;letter-spacing:-0.3px;left:1189.3px;width:400px;text-align:right;">125.00</div>
<div class="t" style="top:639.15px;font-size:14px;color:#212121;letter-spacing:-0.3px;left:1297.3px;width:400px;text-align:right;">125.00</div>
<div class="t" style="top:639.15px;font-size:14px;color:#212121;letter-spacing:-0.3px;left:1405.3px;width:400px;text-align:right;">500.00</div>
<div class="r" style="left:1814px;top:298px;width:15px;height:363px;background:#f4f4f4;"></div>
<svg class="s" style="left:1816px;top:304px;" width="11" height="9" viewBox="0 0 11 9"><path d="M1 8 L5.5 2 L10 8 Z" fill="#8a8a8a"/></svg>
<div class="r" style="left:1817px;top:320px;width:9px;height:100px;background:#888888;border-radius:4.5px;"></div>
</body></html>
